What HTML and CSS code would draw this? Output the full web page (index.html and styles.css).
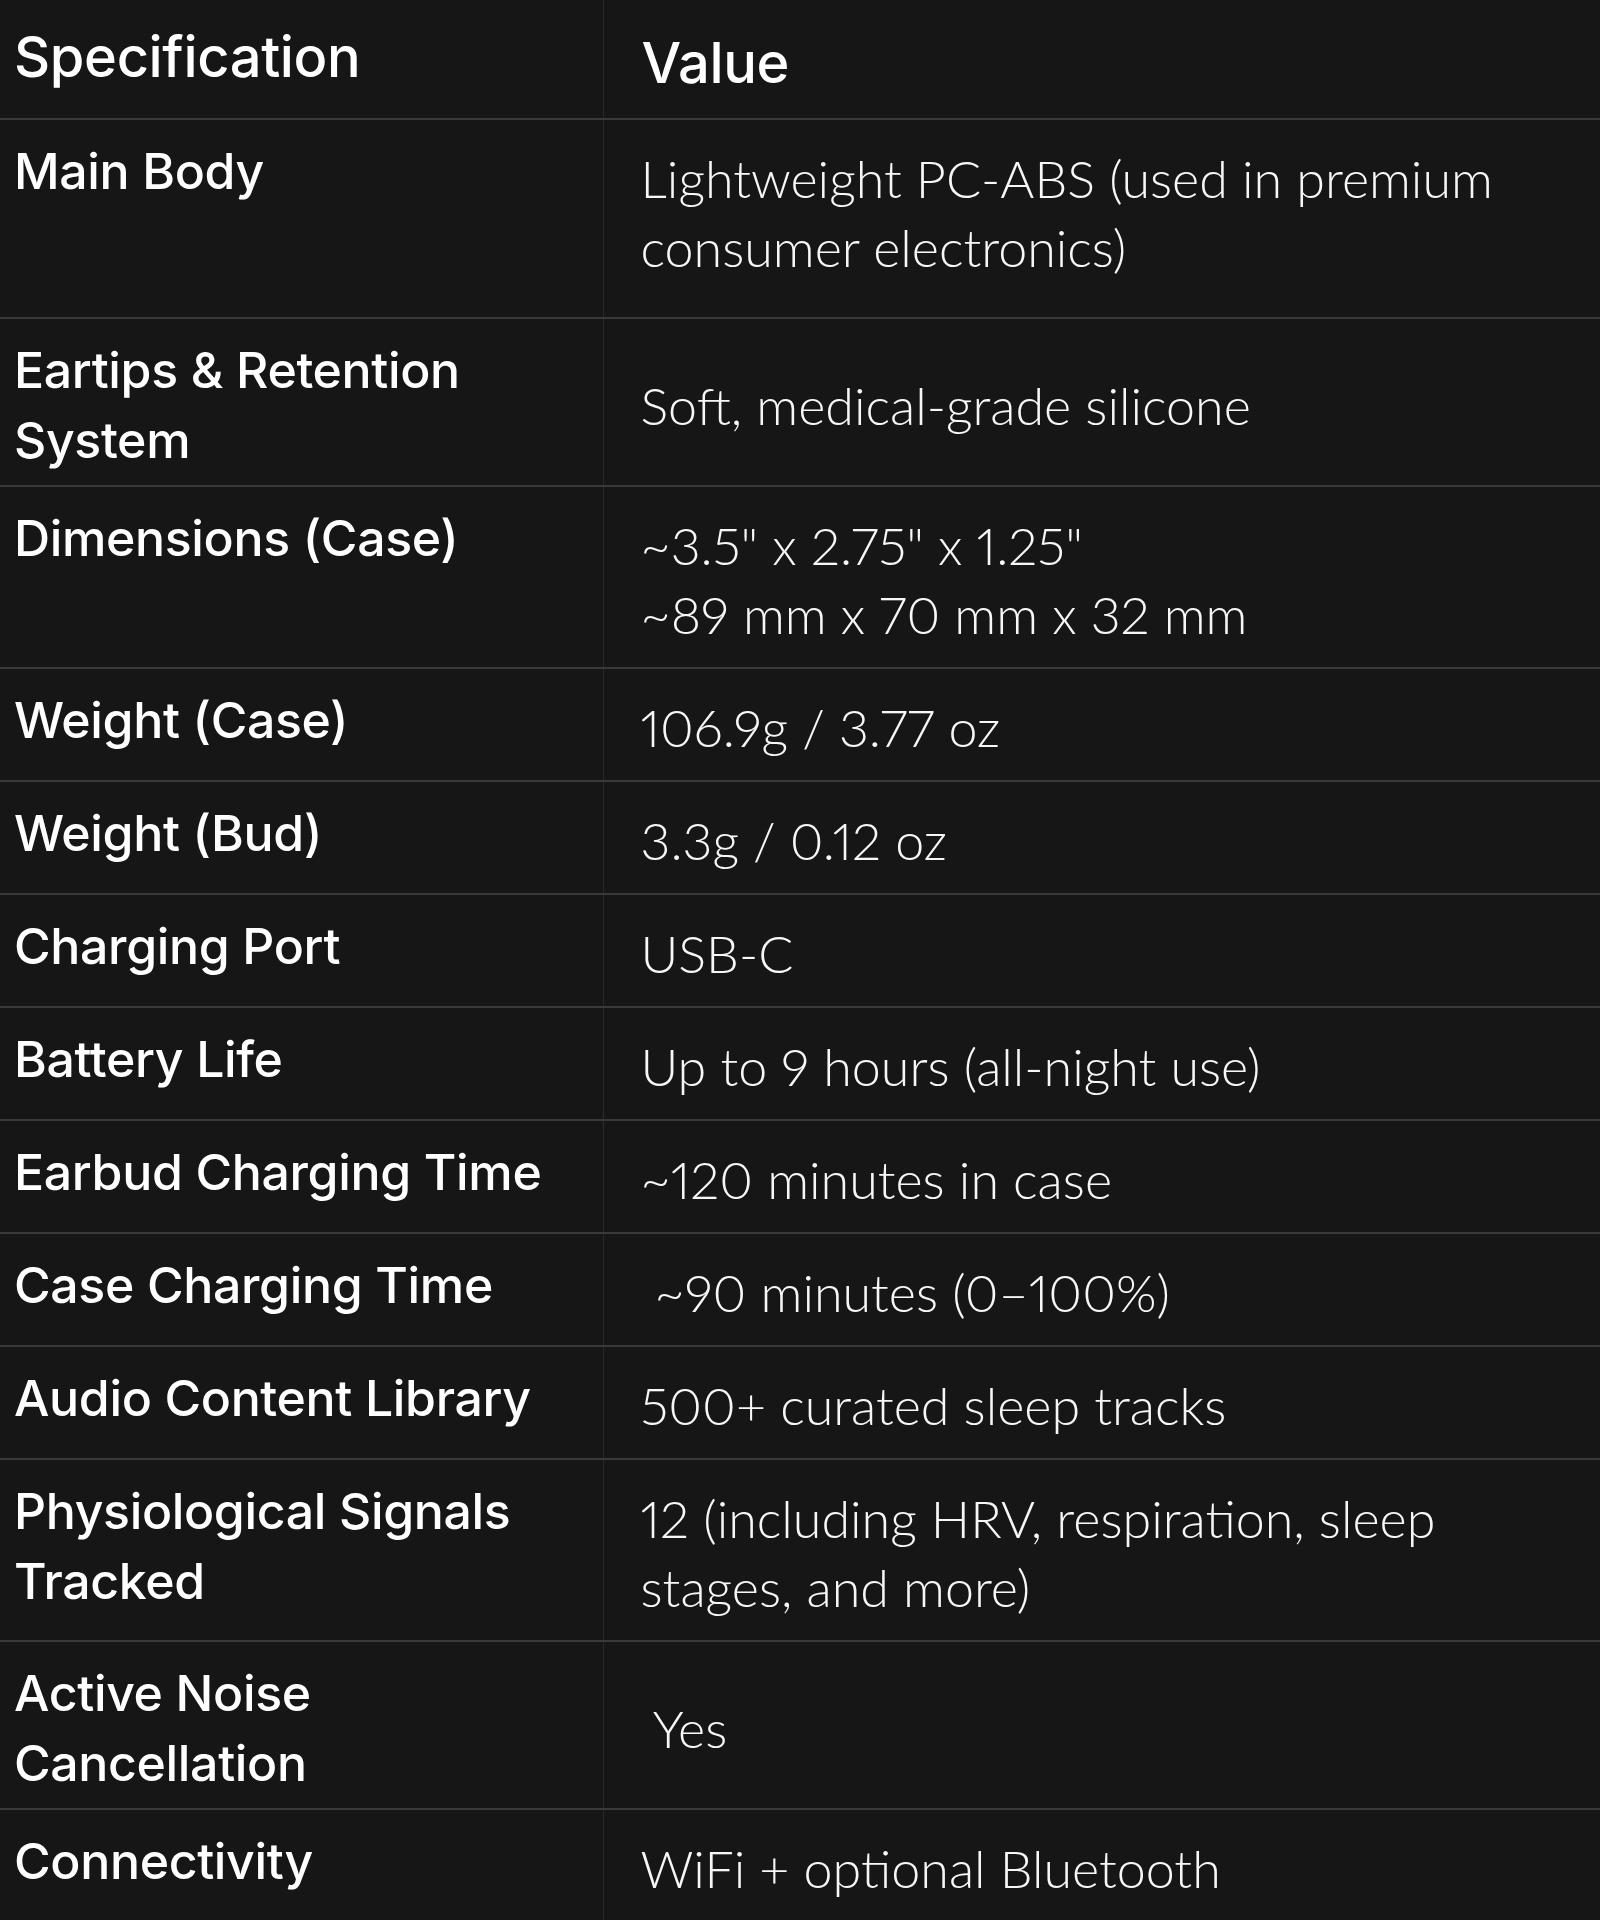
FILE: index.html
```html
<!DOCTYPE html>
<html lang="en">
<head>
<meta charset="utf-8">
<title>Specifications</title>
<link rel="stylesheet" href="styles.css">
</head>
<body>
<table class="spec">
  <colgroup><col class="c1"><col class="c2"></colgroup>
  <thead>
    <tr><th class="k">Specification</th><th class="v">Value</th></tr>
  </thead>
  <tbody>
    <tr><td class="k">Main Body</td><td class="v extra">Lightweight PC-ABS (used in premium consumer electronics)</td></tr>
    <tr><td class="k">Eartips &amp; Retention System</td><td class="v">Soft, medical-grade silicone</td></tr>
    <tr><td class="k">Dimensions (Case)</td><td class="v">~3.5" x 2.75" x 1.25"<br>~89 mm x 70 mm x 32 mm</td></tr>
    <tr><td class="k">Weight (Case)</td><td class="v">106.9g / 3.77 oz</td></tr>
    <tr><td class="k">Weight (Bud)</td><td class="v">3.3g / 0.12 oz</td></tr>
    <tr><td class="k">Charging Port</td><td class="v">USB-C</td></tr>
    <tr><td class="k">Battery Life</td><td class="v">Up to 9 hours (all-night use)</td></tr>
    <tr><td class="k">Earbud Charging Time</td><td class="v">~120 minutes in case</td></tr>
    <tr><td class="k">Case Charging Time</td><td class="v">&nbsp;~90 minutes (0–100%)</td></tr>
    <tr><td class="k">Audio Content Library</td><td class="v">500+ curated sleep tracks</td></tr>
    <tr><td class="k">Physiological Signals Tracked</td><td class="v">12 (including HRV, respiration, sleep stages, and more)</td></tr>
    <tr><td class="k">Active Noise Cancellation</td><td class="v">&nbsp;Yes</td></tr>
    <tr><td class="k">Connectivity</td><td class="v">WiFi + optional Bluetooth</td></tr>
  </tbody>
</table>
</body>
</html>
```
FILE: styles.css
```css
html, body {
  margin: 0;
  padding: 0;
  background: #161616;
}

body {
  color: #ffffff;
  font-family: Lato, "Liberation Sans", sans-serif;
}

.spec {
  width: 1600px;
  border-collapse: collapse;
  table-layout: fixed;
}

.c1 { width: 603px; }

.spec th,
.spec td {
  text-align: left;
  border-bottom: 2px solid #393939;
}

.spec .k {
  vertical-align: top;
  padding: 16px 16px 10px 14px;
  font-family: Inter, Lato, sans-serif;
  font-size: 50px;
  font-weight: 500;
  letter-spacing: -0.35px;
  line-height: 70px;
  border-right: 1px solid #2a2a2a;
}

.spec .v {
  vertical-align: middle;
  padding: 24px 40px 18px 37px;
  font-size: 52px;
  font-weight: 300;
  font-variant-numeric: proportional-nums;
  line-height: 69px;
  color: #f7f7f7;
}

.spec .v.extra {
  padding-bottom: 35px;
}

.spec th.k {
  font-size: 56px;
  padding-top: 22px;
}

.spec th.v {
  font-family: Inter, Lato, sans-serif;
  font-size: 56px;
  font-weight: 500;
  letter-spacing: -0.3px;
  line-height: 75px;
  padding-top: 26px;
  padding-bottom: 17px;
  padding-left: 38px;
  color: #ffffff;
}
```
